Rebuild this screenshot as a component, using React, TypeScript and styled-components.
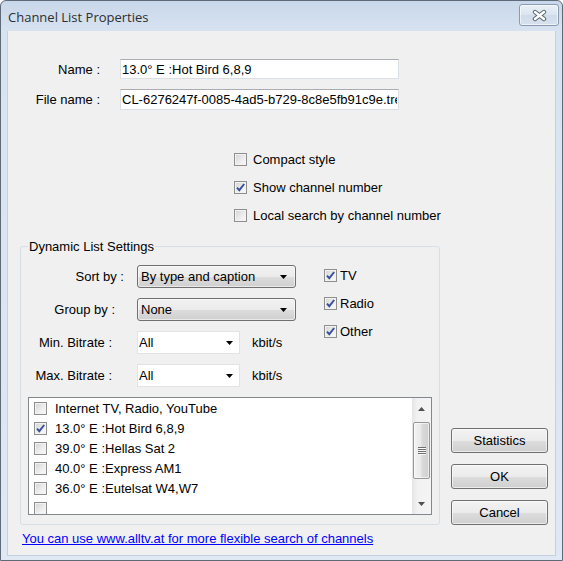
import React from 'react';
import styled, { createGlobalStyle } from 'styled-components';

const GlobalStyle = createGlobalStyle`
  html, body {
    margin: 0;
    padding: 0;
    background: #ffffff;
  }
  body {
    font-family: 'Liberation Sans', Arial, sans-serif;
    font-size: 13px;
    color: #000000;
  }
`;

const Window = styled.div`
  width: 563px;
  height: 561px;
  box-sizing: border-box;
  border: 1px solid #5f6a78;
  border-radius: 6px 6px 0 0;
  background: linear-gradient(#c8d7ea, #d8e3f1 30px, #dfe8f3);
  display: flex;
  flex-direction: column;
  overflow: hidden;
`;

const TitleBar = styled.div`
  height: 30px;
  flex: none;
  display: flex;
  align-items: flex-start;
  justify-content: space-between;
  padding-left: 7px;
`;

const Title = styled.div`
  font-family: 'Open Sans', 'Noto Sans', sans-serif;
  font-size: 13px;
  line-height: 18px;
  margin-top: 7px;
  color: #2e2e2e;
`;

const CloseButton = styled.div`
  width: 40px;
  height: 22px;
  margin: 3px 3px 0 0;
  box-sizing: border-box;
  border: 1px solid #8a9bb1;
  border-radius: 3px;
  background: linear-gradient(#eaf0f7, #dbe5f0 50%, #d0dcea 51%, #d8e2ee);
  box-shadow: inset 0 0 0 1px rgba(255, 255, 255, 0.6);
  display: flex;
  align-items: center;
  justify-content: center;
`;

const Client = styled.div`
  flex: 1;
  margin: 0 6px 4px 6px;
  background: #f0f0f0;
  border: 1px solid #c3d1e1;
  border-top: none;
  display: flex;
  flex-direction: column;
`;

const FormGrid = styled.div`
  display: grid;
  grid-template-columns: 92px 279px;
  grid-template-rows: 20px 21px;
  column-gap: 20px;
  row-gap: 10px;
  margin-top: 28px;
  align-items: center;
`;

const FieldLabel = styled.label`
  text-align: right;
  white-space: nowrap;
`;

const TextField = styled.input`
  height: 100%;
  width: 100%;
  box-sizing: border-box;
  margin: 0;
  padding: 0 1px;
  font: inherit;
  color: #000;
  background: #ffffff;
  border: 1px solid #dbdfe6;
  border-top-color: #abadb3;
  outline: none;
`;

const Options = styled.div`
  margin: 35px 0 0 226px;
  display: flex;
  flex-direction: column;
`;

const CheckRow = styled.label<{ $gap: number; $height: number }>`
  height: ${p => p.$height}px;
  display: flex;
  align-items: center;
  gap: ${p => p.$gap}px;
  white-space: nowrap;
`;

const Box = styled.span`
  width: 13px;
  height: 13px;
  flex: none;
  box-sizing: border-box;
  border: 1px solid #8e8f8f;
  background: linear-gradient(135deg, #d3d3d3 0%, #ececec 55%, #fbfbfb 100%);
  box-shadow: inset 0 0 0 1px #f2f2f2;
  display: flex;
  align-items: center;
  justify-content: center;
`;

const BottomSection = styled.div`
  display: flex;
  align-items: flex-end;
`;

const GroupBox = styled.fieldset`
  width: 420px;
  box-sizing: border-box;
  margin: 10px 0 0 12px;
  padding: 0 7px 9px 7px;
  border: 1px solid #d5dfe5;
  border-radius: 3px;
  min-width: 0;
`;

const GroupCaption = styled.legend`
  padding: 0 1px;
  margin: 0;
  line-height: 15px;
`;

const SettingsRow = styled.div`
  display: flex;
  align-items: flex-start;
  margin-top: 7px;
`;

const SettingsGrid = styled.div`
  display: grid;
  grid-template-columns: 97px 159px;
  grid-auto-rows: 23px;
  column-gap: 12px;
  row-gap: 10px;
  margin-top: 4px;
  align-items: center;
`;

const SettingLabel = styled.span<{ $pad: number }>`
  text-align: right;
  white-space: nowrap;
  padding-right: ${p => p.$pad}px;
`;

const ControlCell = styled.div`
  display: flex;
  align-items: center;
  gap: 12px;
  height: 100%;
`;

const DropButton = styled.div<{ $width: number }>`
  width: ${p => p.$width}px;
  height: 23px;
  box-sizing: border-box;
  border: 1px solid #707070;
  border-radius: 3px;
  background: linear-gradient(#f2f2f2 0%, #ebebeb 50%, #dddddd 51%, #cfcfcf 100%);
  box-shadow: inset 0 0 0 1px rgba(255, 255, 255, 0.55);
  display: flex;
  align-items: center;
  justify-content: space-between;
  padding: 0 8px 0 3px;
  white-space: nowrap;
`;

const EditCombo = styled.div<{ $width: number }>`
  width: ${p => p.$width}px;
  height: 23px;
  box-sizing: border-box;
  border: 1px solid #e3e3e3;
  background: #ffffff;
  display: flex;
  align-items: center;
  justify-content: space-between;
  padding: 0 6px 0 1px;
`;

const Unit = styled.span`
  white-space: nowrap;
`;

const TypeChecks = styled.div`
  margin-left: 28px;
  display: flex;
  flex-direction: column;
`;

const ListBox = styled.div`
  margin-top: 10px;
  height: 118px;
  box-sizing: border-box;
  border: 1px solid #828790;
  background: #ffffff;
  display: flex;
  overflow: hidden;
`;

const ListItems = styled.div`
  flex: 1;
  overflow: hidden;
`;

const ListRow = styled.label`
  height: 20px;
  display: flex;
  align-items: center;
  gap: 8px;
  padding-left: 5px;
  white-space: nowrap;
`;

const ScrollBar = styled.div`
  width: 19px;
  flex: none;
  background: linear-gradient(90deg, #e6e6e6, #f2f2f2 30%, #f4f4f4);
  display: flex;
  flex-direction: column;
  align-items: center;
`;

const ScrollArrow = styled.div`
  height: 21px;
  width: 100%;
  flex: none;
  display: flex;
  align-items: center;
  justify-content: center;
`;

const ScrollThumb = styled.div`
  margin-top: 3px;
  width: 17px;
  height: 57px;
  box-sizing: border-box;
  border: 1px solid #979797;
  border-radius: 2px;
  background: linear-gradient(90deg, #f3f3f3, #e9e9e9 45%, #d9d9d9 55%, #cfcfcf);
  box-shadow: inset 0 0 0 1px rgba(255, 255, 255, 0.6);
  display: flex;
  align-items: center;
  justify-content: center;
`;

const ScrollTrack = styled.div`
  flex: 1;
`;

const ButtonColumn = styled.div`
  margin-left: 11px;
  display: flex;
  flex-direction: column;
  gap: 11px;
`;

const PushButton = styled.button`
  width: 97px;
  height: 25px;
  margin: 0;
  padding: 0;
  box-sizing: border-box;
  font: inherit;
  color: #000;
  border: 1px solid #707070;
  border-radius: 3px;
  background: linear-gradient(#f2f2f2 0%, #ebebeb 50%, #dddddd 51%, #cfcfcf 100%);
  box-shadow: inset 0 0 0 1px rgba(255, 255, 255, 0.6);
`;

const HelpLink = styled.a`
  align-self: flex-start;
  margin: 6px 0 0 14px;
  line-height: 15px;
  color: #0000ff;
  text-decoration: underline;
  cursor: pointer;
`;

function CloseGlyph() {
  return (
    <svg width="15" height="13" viewBox="0 0 15 13">
      <path d="M3 3 L12 10 M12 3 L3 10" stroke="#5c6673" strokeWidth="4.4" strokeLinecap="round" />
      <path d="M3 3 L12 10 M12 3 L3 10" stroke="#ffffff" strokeWidth="2.4" strokeLinecap="round" />
    </svg>
  );
}

function Check({ checked }: { checked?: boolean }) {
  return (
    <Box>
      {checked && (
        <svg width="11" height="11" viewBox="0 0 11 11">
          <path d="M2 5.6 L4.3 8.2 L9.2 2" fill="none" stroke="#3a4e9e" strokeWidth="1.9" />
        </svg>
      )}
    </Box>
  );
}

function DownArrow() {
  return (
    <svg width="7" height="4" viewBox="0 0 7 4">
      <path d="M0 0 H7 L3.5 4 Z" fill="#000" />
    </svg>
  );
}

function ScrollTriangle({ up }: { up?: boolean }) {
  return (
    <svg width="7" height="4" viewBox="0 0 7 4">
      <path d={up ? 'M0 4 H7 L3.5 0 Z' : 'M0 0 H7 L3.5 4 Z'} fill="#505050" />
    </svg>
  );
}

function Grip() {
  return (
    <svg width="8" height="8" viewBox="0 0 8 8">
      {[0, 2, 4, 6].map(y => (
        <g key={y}>
          <rect x="0" y={y} width="8" height="1" fill="#6e6e6e" />
          <rect x="1" y={y + 1} width="7" height="1" fill="#fafafa" />
        </g>
      ))}
    </svg>
  );
}

const satellites = [
  { name: 'Internet TV, Radio, YouTube', checked: false },
  { name: '13.0° E :Hot Bird 6,8,9', checked: true },
  { name: '39.0° E :Hellas Sat 2', checked: false },
  { name: '40.0° E :Express AM1', checked: false },
  { name: '36.0° E :Eutelsat W4,W7', checked: false },
  { name: '', checked: false },
];

const options = [
  { label: 'Compact style', checked: false },
  { label: 'Show channel number', checked: true },
  { label: 'Local search by channel number', checked: false },
];

const types = ['TV', 'Radio', 'Other'];

function App() {
  return (
    <Window>
      <GlobalStyle />
      <TitleBar>
        <Title>Channel List Properties</Title>
        <CloseButton>
          <CloseGlyph />
        </CloseButton>
      </TitleBar>
      <Client>
        <FormGrid>
          <FieldLabel>Name :</FieldLabel>
          <TextField defaultValue="13.0° E :Hot Bird 6,8,9" />
          <FieldLabel>File name :</FieldLabel>
          <TextField readOnly defaultValue="CL-6276247f-0085-4ad5-b729-8c8e5fb91c9e.tre" />
        </FormGrid>

        <Options>
          {options.map(o => (
            <CheckRow key={o.label} $gap={6} $height={28}>
              <Check checked={o.checked} />
              {o.label}
            </CheckRow>
          ))}
        </Options>

        <BottomSection>
          <GroupBox>
            <GroupCaption>Dynamic List Settings</GroupCaption>
            <SettingsRow>
              <SettingsGrid>
                <SettingLabel $pad={1}>Sort by :</SettingLabel>
                <ControlCell>
                  <DropButton $width={159}>
                    By type and caption
                    <DownArrow />
                  </DropButton>
                </ControlCell>
                <SettingLabel $pad={10}>Group by :</SettingLabel>
                <ControlCell>
                  <DropButton $width={159}>
                    None
                    <DownArrow />
                  </DropButton>
                </ControlCell>
                <SettingLabel $pad={13}>Min. Bitrate :</SettingLabel>
                <ControlCell>
                  <EditCombo $width={103}>
                    All
                    <DownArrow />
                  </EditCombo>
                  <Unit>kbit/s</Unit>
                </ControlCell>
                <SettingLabel $pad={13}>Max. Bitrate :</SettingLabel>
                <ControlCell>
                  <EditCombo $width={103}>
                    All
                    <DownArrow />
                  </EditCombo>
                  <Unit>kbit/s</Unit>
                </ControlCell>
              </SettingsGrid>
              <TypeChecks>
                {types.map(t => (
                  <CheckRow key={t} $gap={3} $height={28}>
                    <Check checked />
                    {t}
                  </CheckRow>
                ))}
              </TypeChecks>
            </SettingsRow>

            <ListBox>
              <ListItems>
                {satellites.map((s, i) => (
                  <ListRow key={i}>
                    <Check checked={s.checked} />
                    {s.name}
                  </ListRow>
                ))}
              </ListItems>
              <ScrollBar>
                <ScrollArrow>
                  <ScrollTriangle up />
                </ScrollArrow>
                <ScrollThumb>
                  <Grip />
                </ScrollThumb>
                <ScrollTrack />
                <ScrollArrow>
                  <ScrollTriangle />
                </ScrollArrow>
              </ScrollBar>
            </ListBox>
          </GroupBox>

          <ButtonColumn>
            <PushButton>Statistics</PushButton>
            <PushButton>OK</PushButton>
            <PushButton>Cancel</PushButton>
          </ButtonColumn>
        </BottomSection>

        <HelpLink>You can use www.alltv.at for more flexible search of channels</HelpLink>
      </Client>
    </Window>
  );
}

export default App;
